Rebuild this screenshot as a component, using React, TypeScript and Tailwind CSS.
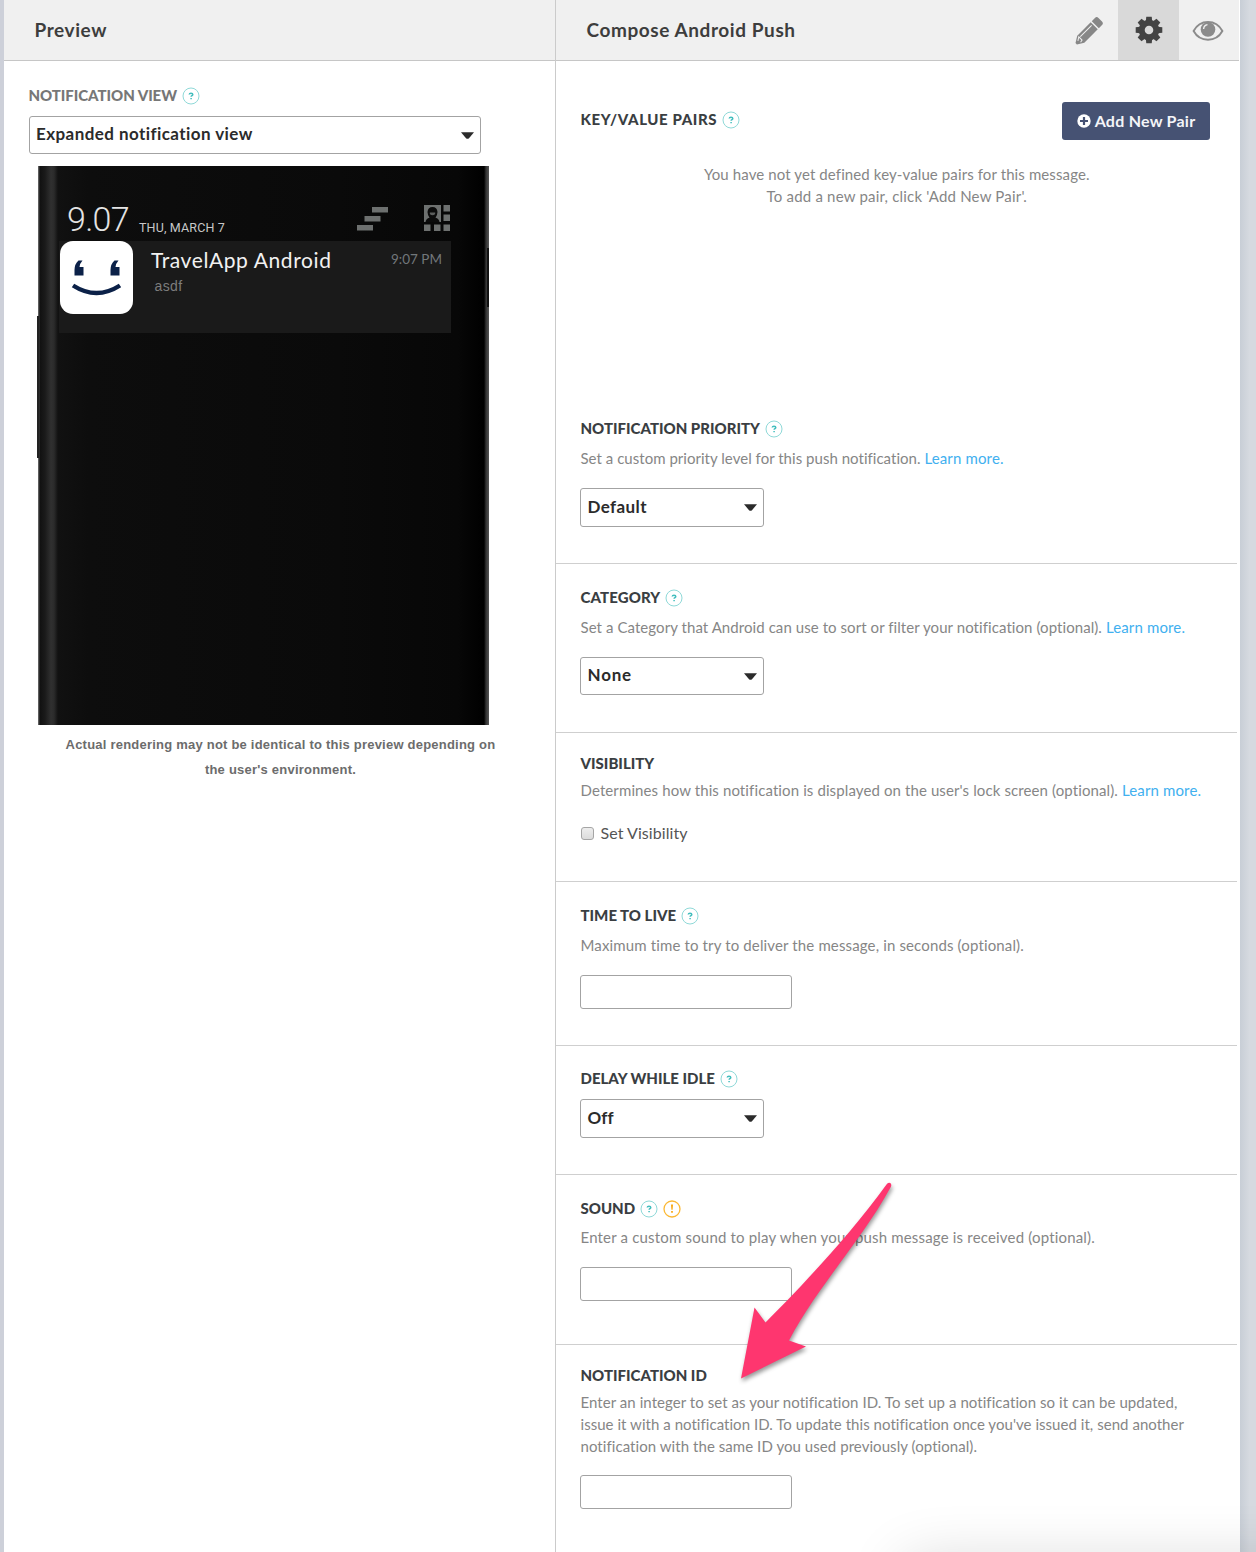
import type { ReactNode } from 'react';

function Badge({ warn = false }: { warn?: boolean }) {
  return (
    <svg width="18" height="18" viewBox="0 0 18 18" className="shrink-0">
      <circle cx="9" cy="9" r="8" fill="#fff" stroke={warn ? '#fbb833' : '#8fd9d8'} strokeWidth={warn ? 1.3 : 1} />
      {warn ? (
        <path d="M7.900 4.600h2.200l-.5 5.200H8.400zM8.100 11h1.800v1.800H8.100z" fill="#f9ab1b" />
      ) : (
        <path d="M7.200 7.500C7.300 6.700 8 6.200 9 6.200c1.100 0 1.800.5 1.800 1.300 0 1.100-1.600 1.200-1.700 2.300M9.100 10.900v1.400" fill="none" stroke="#41bdbd" strokeWidth="1.500" />
      )}
    </svg>
  );
}

function Heading({ children, help = false, warn = false }: { children: ReactNode; help?: boolean; warn?: boolean }) {
  return (
    <div className="flex h-5 items-center gap-[5px] pl-[0.5px] text-[15px] font-black leading-5 text-[#3a3e42]">
      {children}
      {help && <span className="mt-[2px]"><Badge /></span>}
      {warn && <span className="mt-[2px]"><Badge warn /></span>}
    </div>
  );
}

function SelectBox({ children, className }: { children: ReactNode; className: string }) {
  return (
    <div className={`flex items-center justify-between rounded-[3px] border border-[#a3a3a3] bg-white pl-[6.5px] pr-[6px] text-[17px] font-bold text-[#2b2b2b] ${className}`}>
      <span className="-mt-[3px] leading-none">{children}</span>
      <svg width="13" height="7" viewBox="0 0 13 7"><path d="M0 .3h13L8 6.2q-1.5 1-3 0z" fill="#2b2b2b" /></svg>
    </div>
  );
}

function TextInput({ className }: { className: string }) {
  return <input type="text" className={`block h-[34px] w-[212px] rounded-[3px] border border-[#a3a3a3] bg-white px-2 outline-none ${className}`} />;
}

function Desc({ children, className }: { children: ReactNode; className: string }) {
  return <p className={`whitespace-nowrap pl-[0.5px] text-[15px] leading-[22px] text-[#868686] ${className}`}>{children}</p>;
}

const Learn = () => <a href="#" className="tracking-[0.14px] text-[#41b0ef]">Learn more.</a>;

function Section({ children, className }: { children: ReactNode; className: string }) {
  return <section className={`mr-[3px] border-b border-[#cfcfcf] pl-[24px] ${className}`}>{children}</section>;
}

function PencilIcon() {
  return (
    <svg width="28" height="28" viewBox="0 0 28 28" className="ml-[2px] mt-px">
      <g transform="translate(1.2 26.8) rotate(-45)" fill="#878787">
        <path d="M0 0V-1L6.500-5H25.500V5H6.500L0 1z" />
        <path d="M27-5h4.500q2.500 0 2.500 2.500v5q0 2.500-2.500 2.500H27z" />
        <path d="M8-2.200H24M3.200-.8l3.600-2.300v4.600L4.200 2" stroke="#f0f0f0" strokeWidth="1" fill="none" />
      </g>
    </svg>
  );
}

function GearIcon() {
  return (
    <svg width="28" height="28" viewBox="-14 -14 28 28" fill="#434343" className="ml-[2px]">
      {[0, 45, 90, 135, 180, 225, 270, 315].map((a) => (
        <path key={a} d="M-3.200-9-2.700-13.300h5.400L3.200-9z" transform={`rotate(${a})`} />
      ))}
      <circle r="7.300" fill="none" stroke="#434343" strokeWidth="6" />
    </svg>
  );
}

function EyeIcon() {
  return (
    <svg width="32" height="22" viewBox="0 0 32 22" className="-ml-px mt-[2px]">
      <path d="M1.600 11C8-1 24-1 30.400 11 24 22.600 8 22.600 1.600 11z" fill="none" stroke="#8b8b8b" strokeWidth="1.900" />
      <circle cx="16" cy="9.500" r="7.300" fill="#8b8b8b" />
      <path d="M11.600 9q.3-3.800 3.900-4.400" fill="none" stroke="#f0f0f0" strokeWidth="1.400" />
    </svg>
  );
}

function PhonePreview() {
  return (
    <div className="relative ml-[34px] mt-[12px] h-[558.500px] w-[451px] bg-[linear-gradient(to_right,#777_0,#111_2px,#1a1a1a_7px,#303030_13px,#2b2b2b_16px,#111_20px,#0d0d0d_50px,#0a0a0a_300px,#070707_420px,#000_446px,#333_448px,#555_451px)]">
      <div className="absolute -left-px top-[150px] h-[142px] w-[2px] bg-[#222]" />
      <div className="absolute right-0 top-[82px] h-[59px] w-[2px] bg-[#111]" />
      <div className="flex h-[75px] items-end pl-[29px] text-[#e4e4e4]">
        <span className="mb-[2px] w-[72px] font-[Roboto] text-[34px] font-light leading-[40px] tracking-[-0.7px]">9.07</span>
        <span className="mb-[5px] font-[Roboto] text-[12.5px] leading-4 tracking-[0.16px] text-[#c8c8c8]">THU, MARCH 7</span>
        <svg width="32" height="26" viewBox="0 0 32 26" className="mb-[9px] ml-auto mr-[35px]" fill="#6d706f">
          <path d="M15 1h16v5.500h-16zM7.500 10h16v5.500H7.500zM0 19h16v5.500H0z" />
        </svg>
        <svg width="27" height="27" viewBox="0 0 27 27" className="mb-[9px] mr-[38px]" fill="#6d706f">
          <path d="M0 0h17v17H0z" />
          <path d="M1.500 17q.5-3.500 4-4.200Q3.500 9.500 3.500 7 4 2 8.500 2t5 5q0 2.500-2 5.800 3.500.7 4 4.200z" fill="#0b0b0b" />
          <path d="M5.800 7.500h5.400q.3 2.800-2.700 2.800T5.800 7.500z" fill="#5c5e5d" />
          <path d="M19.500 0H26v6.500h-6.500zM19.500 9.500H26V16h-6.500zM0 19.500h6.500V26H0zM10 19.500h6.500V26H10zM19.500 19.500H26V26h-6.500z" />
        </svg>
      </div>
      <div className="ml-[21px] flex h-[92px] w-[392px] bg-[#1a1a1a] pl-[1px]">
        <svg width="73" height="73" viewBox="0 0 73 73" className="shrink-0">
          <rect width="73" height="73" rx="13" fill="#fff" />
          <g fill="#0b2148">
            <path d="M22.500 19.500h-4Q14.500 23 14.500 29v5.500h9V26h-4q.3-3.500 3-6.500z" />
            <path d="M58.500 19.500h-4Q50.500 23 50.500 29v5.500h9V26h-4q.3-3.500 3-6.500z" />
          </g>
          <path d="M13 44.500Q36.500 59.500 60 44.500" fill="none" stroke="#0b2148" strokeWidth="4.400" />
        </svg>
        <div className="ml-[18px] pt-[6px]">
          <div className="text-[21px] leading-[26px] tracking-[0.6px] text-[#f2f2f2]">TravelApp Android</div>
          <div className="ml-[3.500px] mt-[5px] font-['Liberation_Sans'] text-[14px] leading-[16px] tracking-[0.4px] text-[#7d7d7d]">asdf</div>
        </div>
        <div className="ml-auto mr-[9px] mt-[9px] text-[13.500px] leading-[18px] text-[#72777a]">9:07 PM</div>
      </div>
    </div>
  );
}

export default function App() {
  return (
    <div className="relative flex h-[1552px] w-[1256px] overflow-hidden bg-[#d5d9df] font-[Lato,sans-serif]">
      <div className="w-1 shrink-0 bg-[#cdd0d9]" />
      <div className="w-[552px] shrink-0 border-r border-[#cbcbcb] bg-white">
        <header className="h-[61px] border-b border-[#c6c6c6] bg-[#f0f0f0] pl-[30.500px] text-[19px] font-bold leading-[60px] tracking-[0.58px] text-[#3d3d3d]">Preview</header>
        <div className="ml-[24.500px] mt-[24.500px] flex h-5 items-center gap-[5px] text-[15px] font-black tracking-[-0.05px] text-[#777]">
          NOTIFICATION VIEW
          <Badge />
        </div>
        <SelectBox className="ml-[24.500px] mt-[10.500px] h-[38px] w-[452.500px] tracking-[0.43px]">Expanded notification view</SelectBox>
        <PhonePreview />
        <p className="ml-[34px] mt-[8.500px] w-[485px] text-center font-['Liberation_Sans'] text-[13px] font-bold leading-[24.500px] tracking-[0.22px] text-[#6c6c6c]">
          Actual rendering may not be identical to this preview depending on
          <br />
          the user's environment.
        </p>
      </div>

      <main className="w-[684px] shrink-0 bg-white">
        <header className="mr-px flex h-[61px] border-b border-[#c6c6c6] bg-[#f0f0f0]">
          <h1 className="flex-1 pl-[30.500px] text-[19px] font-bold leading-[60px] tracking-[0.58px] text-[#3d3d3d]">Compose Android Push</h1>
          <div className="flex w-[60px] items-center justify-center"><PencilIcon /></div>
          <div className="flex w-[61px] items-center justify-center bg-[#d9d9d9]"><GearIcon /></div>
          <div className="flex w-[60.500px] items-center justify-center"><EyeIcon /></div>
        </header>

        <Section className="h-[503px] pt-[41px]">
          <div className="flex h-[38px] justify-between pr-[27px]">
            <div className="pt-[7px]"><Heading help><span className="tracking-[0.6px]">KEY/VALUE PAIRS</span></Heading></div>
            <button className="flex h-[38px] w-[148px] items-center justify-center gap-[4px] rounded-[3px] bg-[#465273] text-[16px] font-bold tracking-[0.25px] text-[#f4f5f8]">
              <svg width="14" height="14" viewBox="0 0 14 14"><circle cx="7" cy="7" r="6.700" fill="#fff" /><path d="M7 3v8M3 7h8" stroke="#465273" strokeWidth="2.200" /></svg>
              Add New Pair
            </button>
          </div>
          <Desc className="mt-[23px] pr-[24px] text-center">
            <span className="tracking-[0.11px]">You have not yet defined key-value pairs for this message.</span>
            <br />
            <span className="tracking-[0.2px]">To add a new pair, click 'Add New Pair'.</span>
          </Desc>
          <div className="mt-[211px]"><Heading help>NOTIFICATION PRIORITY</Heading></div>
          <Desc className="mt-[9px]"><span className="tracking-[0.03px]">Set a custom priority level for this push notification. </span><Learn /></Desc>
          <SelectBox className="mt-[19px] h-[39px] w-[184px] tracking-[0.4px]">Default</SelectBox>
        </Section>

        <Section className="h-[169px] pt-[23px]">
          <Heading help><span className="tracking-[0.1px]">CATEGORY</span></Heading>
          <Desc className="mt-[9px]"><span className="tracking-[0.07px]">Set a Category that Android can use to sort or filter your notification (optional). </span><Learn /></Desc>
          <SelectBox className="mt-[19px] h-[38px] w-[184px] tracking-[0.8px]">None</SelectBox>
        </Section>

        <Section className="h-[149px] pt-[20px]">
          <Heading>VISIBILITY</Heading>
          <Desc className="mt-[6px]"><span className="tracking-[0.11px]">Determines how this notification is displayed on the user's lock screen (optional). </span><Learn /></Desc>
          <div className="mt-[22px] flex h-5 items-center gap-[7px] pl-[0.5px] text-[16px] tracking-[0.07px] text-[#555]">
            <span className="h-[13px] w-[13px] rounded-[3px] border border-[#a5a5a5] bg-gradient-to-b from-[#ededed] to-[#dcdcdc]" />
            Set Visibility
          </div>
        </Section>

        <Section className="h-[164px] pt-[23px]">
          <Heading help>TIME TO LIVE</Heading>
          <Desc className="mt-[9px] tracking-[0.14px]">Maximum time to try to deliver the message, in seconds (optional).</Desc>
          <TextInput className="mt-[19px]" />
        </Section>

        <Section className="h-[129px] pt-[22px]">
          <Heading help>DELAY WHILE IDLE</Heading>
          <SelectBox className="mt-[11px] h-[39px] w-[184px] tracking-[0.1px]">Off</SelectBox>
        </Section>

        <Section className="h-[170px] pt-[23px]">
          <Heading help warn>SOUND</Heading>
          <Desc className="mt-[8px] tracking-[0.18px]">Enter a custom sound to play when your push message is received (optional).</Desc>
          <TextInput className="mt-[19px]" />
        </Section>

        <section className="pl-[24px] pt-[20px]">
          <Heading>NOTIFICATION ID</Heading>
          <Desc className="mt-[6px] tracking-[0.06px]">
            Enter an integer to set as your notification ID. To set up a notification so it can be updated,
            <br />
            <span className="tracking-[0.04px]">issue it with a notification ID. To update this notification once you've issued it, send another</span>
            <br />
            notification with the same ID you used previously (optional).
          </Desc>
          <TextInput className="mt-[18px]" />
        </section>
      </main>
      <div className="flex-1 bg-gradient-to-r from-[#c8ced6] to-[#d6dae0] to-60%" />

      <svg width="180" height="210" viewBox="730 1175 180 210" className="absolute left-[730px] top-[1175px] drop-shadow-[1px_3px_2px_rgba(0,0,0,0.4)]">
        <path d="M741 1378.500 754.500 1307.500 765.500 1322.500C800 1288 850 1235 886.500 1184.500Q888 1182 890.300 1183 892 1184.500 890.800 1187C862 1240 815 1290 789 1340.500L806 1346.500z" fill="#fe366f" />
      </svg>
      <div className="pointer-events-none absolute left-[905px] top-[1562px] h-[100px] w-[500px] shadow-[0_0_60px_rgba(0,0,0,0.16)]" />
    </div>
  );
}
